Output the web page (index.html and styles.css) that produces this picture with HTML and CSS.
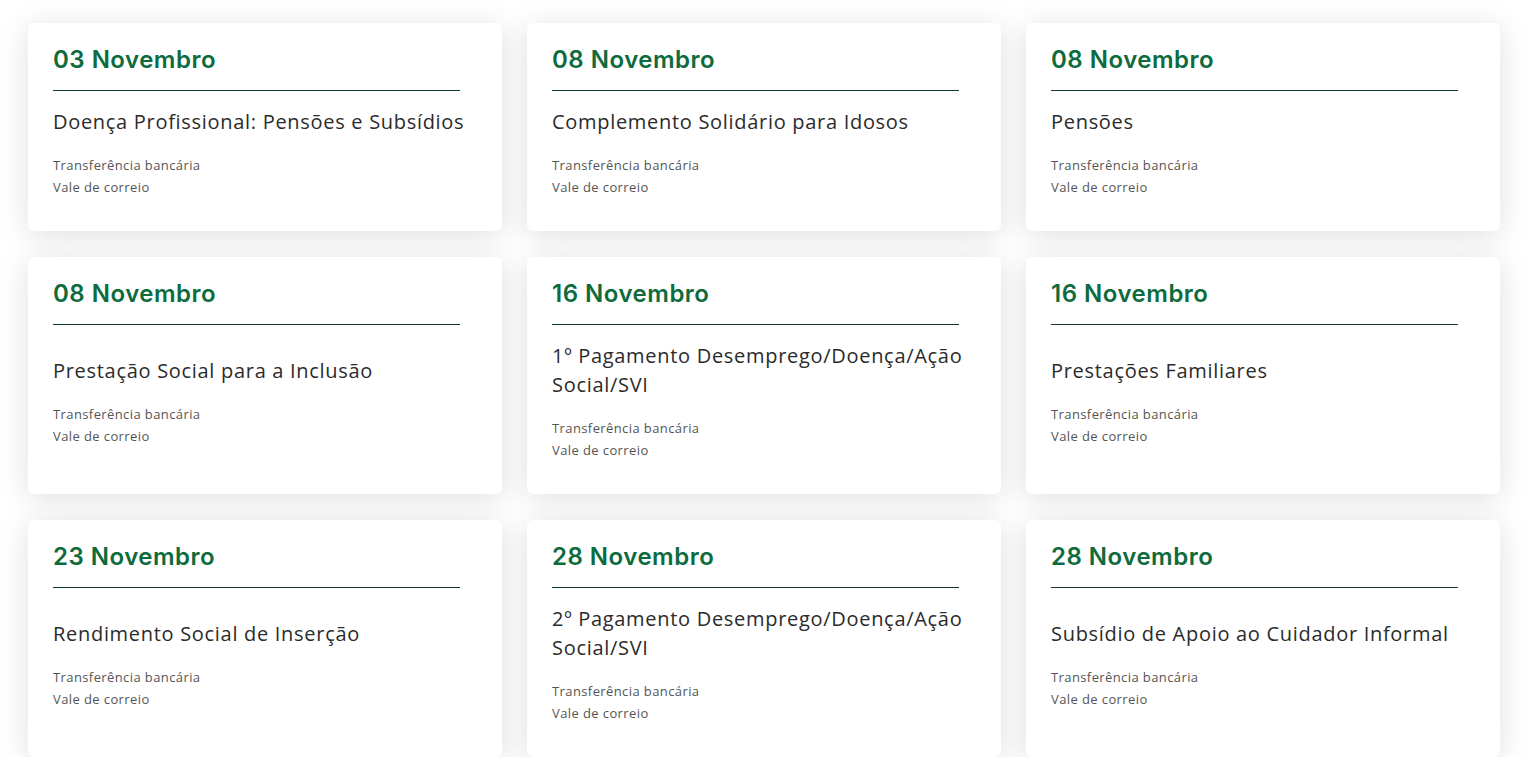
FILE: index.html
```html
<!DOCTYPE html>
<html lang="pt">
<head>
<meta charset="utf-8">
<title>Calendário de pagamentos</title>
<link rel="stylesheet" href="styles.css">
</head>
<body>
<main class="grid">
  <article class="card">
    <div class="card-head"><h3 class="date">03 Novembro</h3><hr class="rule"></div>
    <div class="card-body"><h4 class="title">Doença Profissional: Pensões e Subsídios</h4><p class="meta">Transferência bancária<br>Vale de correio</p></div>
  </article>
  <article class="card">
    <div class="card-head"><h3 class="date">08 Novembro</h3><hr class="rule"></div>
    <div class="card-body"><h4 class="title">Complemento Solidário para Idosos</h4><p class="meta">Transferência bancária<br>Vale de correio</p></div>
  </article>
  <article class="card">
    <div class="card-head"><h3 class="date">08 Novembro</h3><hr class="rule"></div>
    <div class="card-body"><h4 class="title">Pensões</h4><p class="meta">Transferência bancária<br>Vale de correio</p></div>
  </article>
  <article class="card">
    <div class="card-head"><h3 class="date">08 Novembro</h3><hr class="rule"></div>
    <div class="card-body"><h4 class="title">Prestação Social para a Inclusão</h4><p class="meta">Transferência bancária<br>Vale de correio</p></div>
  </article>
  <article class="card">
    <div class="card-head"><h3 class="date">16 Novembro</h3><hr class="rule"></div>
    <div class="card-body"><h4 class="title">1º Pagamento Desemprego/Doença/Ação Social/SVI</h4><p class="meta">Transferência bancária<br>Vale de correio</p></div>
  </article>
  <article class="card">
    <div class="card-head"><h3 class="date">16 Novembro</h3><hr class="rule"></div>
    <div class="card-body"><h4 class="title">Prestações Familiares</h4><p class="meta">Transferência bancária<br>Vale de correio</p></div>
  </article>
  <article class="card">
    <div class="card-head"><h3 class="date">23 Novembro</h3><hr class="rule"></div>
    <div class="card-body"><h4 class="title">Rendimento Social de Inserção</h4><p class="meta">Transferência bancária<br>Vale de correio</p></div>
  </article>
  <article class="card">
    <div class="card-head"><h3 class="date">28 Novembro</h3><hr class="rule"></div>
    <div class="card-body"><h4 class="title">2º Pagamento Desemprego/Doença/Ação Social/SVI</h4><p class="meta">Transferência bancária<br>Vale de correio</p></div>
  </article>
  <article class="card">
    <div class="card-head"><h3 class="date">28 Novembro</h3><hr class="rule"></div>
    <div class="card-body"><h4 class="title">Subsídio de Apoio ao Cuidador Informal</h4><p class="meta">Transferência bancária<br>Vale de correio</p></div>
  </article>
</main>
</body>
</html>
```

FILE: styles.css
```css
html, body {
  margin: 0;
  padding: 0;
  background: #ffffff;
}
body {
  font-family: "Open Sans", "Noto Sans", sans-serif;
  color: #333333;
}
.grid {
  display: grid;
  grid-template-columns: repeat(3, 474px);
  column-gap: 25px;
  row-gap: 26px;
  padding: 23px 0 0 28px;
}
.card {
  background: #ffffff;
  border-radius: 6px;
  box-shadow: 0 4px 30px rgba(0, 0, 0, 0.13);
  padding: 0 25px;
  display: flex;
  flex-direction: column;
}
.card-head {
  padding-top: 23px;
}
.date {
  margin: 0;
  font-family: "Inter", "Noto Sans", sans-serif;
  font-weight: 600;
  font-size: 24px;
  line-height: 28px;
  letter-spacing: 0.5px;
  color: #0d6b3d;
}
.rule {
  margin: 16px 0 0 0;
  width: 407px;
  border: 0;
  height: 1px;
  background: #0e3b2c;
}
.card-body {
  flex: 1;
  display: flex;
  flex-direction: column;
  justify-content: center;
  padding: 16px 0 33px;
}
.title {
  margin: 0;
  font-size: 20px;
  font-weight: 500;
  line-height: 29px;
  letter-spacing: 0.7px;
  color: #2b2b2b;
}
.meta {
  margin: 18px 0 0 0;
  font-size: 13px;
  line-height: 22px;
  letter-spacing: 0.4px;
  color: #555555;
}
```
